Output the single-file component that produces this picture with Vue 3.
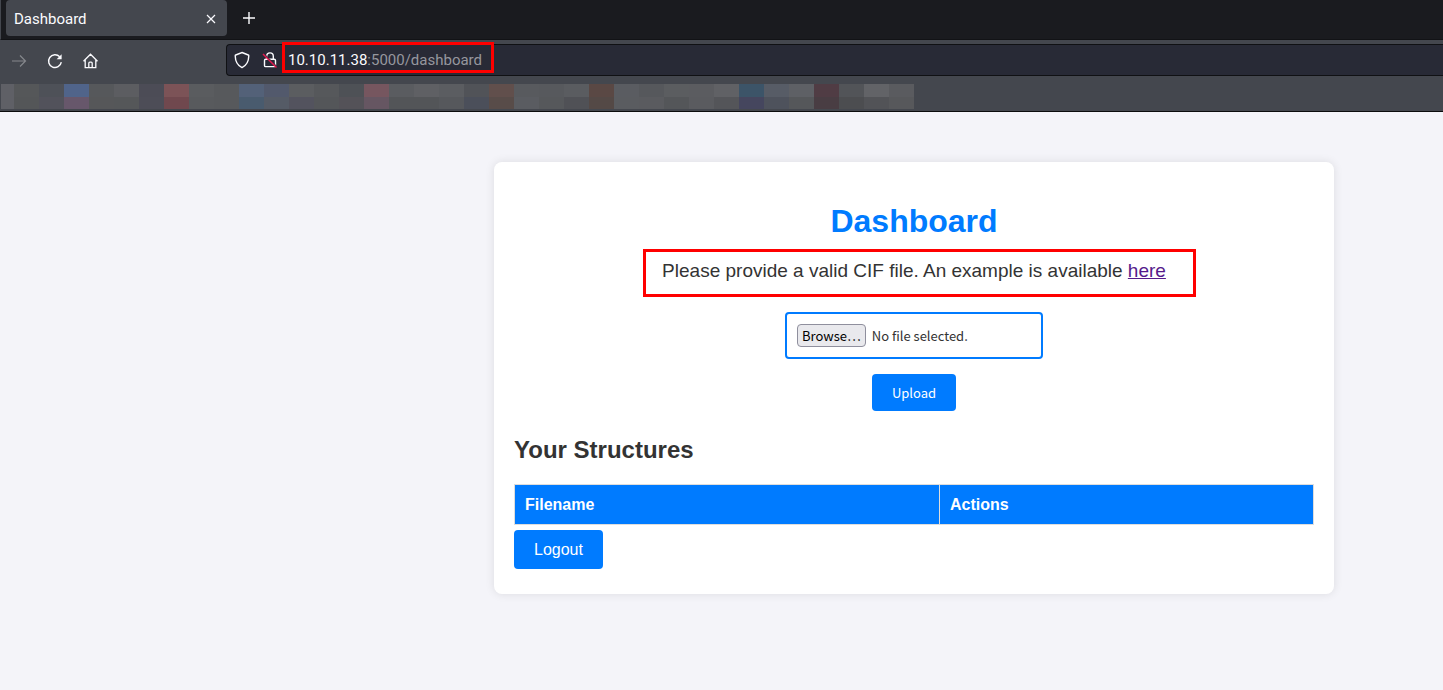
<script setup>
import { ref } from 'vue'

const address = { host: '10.10.11.38', rest: ':5000/dashboard' }
const fileLabel = ref('No file selected.')

function onFile(event) {
  const file = event.target.files[0]
  fileLabel.value = file ? file.name : 'No file selected.'
}

// Blurred bookmark blocks: [upper colour, lower colour]
const blocks = [
  ['#5f6066', '#5f6066'], ['#555759', '#545658'], ['#4e5158', '#52525b'], ['#50648a', '#67576b'],
  ['#56585b', '#565759'], ['#5c5d61', '#555759'], ['#4c4c56', '#4d4d57'], ['#7c5357', '#70484e'],
  ['#5a5c5f', '#585a5d'], ['#57595c', '#57595c'], ['#536178', '#495b6e'], ['#52596c', '#555b66'],
  ['#5b5d60', '#53535e'], ['#56585b', '#545659'], ['#4e5156', '#545258'], ['#76565f', '#665662'],
  ['#5a5c60', '#535558'], ['#5f6064', '#535558'], ['#5b5d61', '#56585c'], ['#515358', '#4b4f5a'],
  ['#614f4c', '#584c49'], ['#585a5e', '#5a5c61'], ['#57595d', '#56585b'], ['#5a5c60', '#505156'],
  ['#5a4844', '#544946'], ['#5a5c61', '#5a5c60'], ['#56585c', '#5a5b5f'], ['#5b5d60', '#545659'],
  ['#5b5c60', '#5a5b5f'], ['#606165', '#545559'], ['#3c5468', '#45465e'], ['#575c66', '#4e525c'],
  ['#5e6065', '#55575a'], ['#503c44', '#493d43'], ['#525458', '#4c4d50'], ['#626367', '#525357'],
  ['#5a5b5f', '#57585b']
]
</script>

<template>
  <div class="browser">
    <header class="chrome">
      <div class="tabs">
        <div class="tab">
          <span>Dashboard</span>
          <button class="icon-button" type="button" aria-label="Close tab">
            <svg width="10" height="10" viewBox="0 0 10 10"><path d="M1 1l8 8M9 1l-8 8" /></svg>
          </button>
        </div>
        <button class="icon-button new-tab" type="button" aria-label="New tab">
          <svg width="14" height="14" viewBox="0 0 14 14"><path d="M7 1v12M1 7h12" stroke-width="1.4" /></svg>
        </button>
      </div>

      <div class="toolbar">
        <nav class="nav">
          <button class="icon-button" type="button" aria-label="Forward" disabled>
            <svg width="16" height="16" viewBox="0 0 16 16"><path d="M1 8h14M9 2.500l5.500 5.500-5.500 5.500" /></svg>
          </button>
          <button class="icon-button" type="button" aria-label="Reload">
            <svg width="16" height="16" viewBox="0 0 16 16">
              <path d="M14.300 9.200A6.400 6.400 0 1 1 12.700 3.800" stroke-width="1.400" />
              <path class="solid" d="M14.600 1.200v5H9.600z" />
            </svg>
          </button>
          <button class="icon-button" type="button" aria-label="Home">
            <svg width="16" height="16" viewBox="0 0 16 16">
              <path d="M.5 8.200 7.500 1.200l7 7M2.200 7v7.600h10.600V7M5.800 14.500v-4.300q0-1 1-1h1.400q1 0 1 1v4.300" stroke-width="1.300" />
            </svg>
          </button>
        </nav>
        <div class="urlbar">
          <svg width="16" height="18" viewBox="0 0 16 18">
            <path d="M8 1.500 14.300 4q.5.200.5.800C14.700 10 12.500 14.500 8 16.600 3.500 14.500 1.300 10 1.200 4.800q0-.6.500-.8z" stroke-width="1.400" />
          </svg>
          <svg width="16" height="18" viewBox="0 0 16 18">
            <path d="M4.700 8V5.200a3.300 3.300 0 0 1 6.600 0V8M3.700 8.200h8.600q1.200 0 1.200 1.200v5q0 1.200-1.200 1.200H3.700q-1.200 0-1.200-1.200v-5q0-1.200 1.200-1.200z" stroke-width="1.400" />
            <path class="slash-gap" d="M2 3l13 13" />
            <path class="slash" d="M1 3l13.500 13.500" />
          </svg>
          <div class="address">
            <span class="host">{{ address.host }}</span><span>{{ address.rest }}</span>
          </div>
        </div>
      </div>

      <div class="bookmarks">
        <div v-for="(block, i) in blocks" :key="i" class="block">
          <i :style="{ background: block[0] }"></i>
          <i :style="{ background: block[1] }"></i>
        </div>
      </div>
    </header>

    <main class="page">
      <section class="card">
        <h1>Dashboard</h1>
        <p class="hint">Please provide a valid CIF file. An example is available <a href="#example">here</a></p>
        <form class="upload" @submit.prevent>
          <label class="picker">
            <input type="file" class="file" @change="onFile" />
            <span class="browse">Browse…</span>
            <span>{{ fileLabel }}</span>
          </label>
          <button class="action" type="submit">Upload</button>
        </form>
        <h2>Your Structures</h2>
        <table>
          <thead>
            <tr>
              <th class="filename" scope="col">Filename</th>
              <th scope="col">Actions</th>
            </tr>
          </thead>
        </table>
        <a class="action logout" href="#logout">Logout</a>
      </section>
    </main>
  </div>
</template>

<style>
body {
  background: #f4f4f9;
}
</style>

<style scoped>
.browser {
  overflow: hidden;
  color: #333;
  font-family: "Liberation Sans", Arial, sans-serif;
}

.browser * {
  box-sizing: border-box;
}

.chrome {
  background: #44474e;
  border-bottom: 1px solid #0c0c0d;
  color: #fbfbfe;
  font: 15px/20px Roboto, "Noto Sans", sans-serif;
}

svg {
  display: block;
  flex: none;
  fill: none;
  stroke: currentColor;
  stroke-width: 1.2;
}

.solid {
  fill: currentColor;
  stroke: none;
}

.icon-button {
  display: flex;
  padding: 0;
  border: 0;
  background: none;
  color: inherit;
}

.icon-button:disabled {
  color: #85878c;
}

.tabs {
  display: flex;
  align-items: center;
  height: 40px;
  padding: 0 0 3px 5px;
  background: #1a1b1f;
  border-left: 1px solid #44474e;
  border-bottom: 1px solid #121316;
}

.tab {
  display: flex;
  align-items: center;
  justify-content: space-between;
  width: 221px;
  height: 36px;
  padding: 1px 11px 0 8px;
  border-radius: 4px;
  background: #44474e;
}

.new-tab {
  margin-left: 15px;
}

.toolbar {
  display: flex;
  align-items: center;
  padding-top: 4px;
}

.nav {
  display: flex;
  gap: 20px;
  width: 226px;
  padding: 2px 0 0 11px;
}

.urlbar {
  display: flex;
  flex: 1;
  align-items: center;
  gap: 12px;
  height: 32px;
  padding-left: 7px;
  border: 1px solid #101114;
  border-right: 0;
  border-radius: 4px 0 0 4px;
  background: #282a36;
}

.address {
  position: relative;
  margin-left: -2px;
  color: #96979e;
}

.address::after {
  position: absolute;
  inset: -8px -12px -3px -6px;
  border: 3px solid #f00;
  content: "";
  pointer-events: none;
}

.host {
  color: #fbfbfe;
}

.slash-gap {
  stroke: #282a36;
}

.slash {
  stroke: #e2184f;
  stroke-width: 1.5;
}

.bookmarks {
  display: flex;
  padding: 8px 0 2px 1px;
}

.block {
  display: grid;
  grid-template-rows: 13px 12px;
  width: 25px;
}

.block:first-child {
  width: 13px;
}

.page {
  padding: 50px 109px 50px 0;
}

.card {
  max-width: 840px;
  margin-left: auto;
  padding: 41px 20px 25px;
  border-radius: 8px;
  background: #fff;
  box-shadow: 0 0 10px rgba(0, 0, 0, 0.1);
}

h1 {
  margin: 0;
  color: #007bff;
  font-size: 32px;
  line-height: 36px;
  text-align: center;
}

.hint {
  position: relative;
  width: fit-content;
  margin: 21px auto 30px;
  font-size: 19px;
  line-height: 22px;
}

.hint::after {
  position: absolute;
  inset: -11px -30px -15px -19px;
  border: 3px solid #f00;
  content: "";
  pointer-events: none;
}

.hint a {
  color: #551a8b;
}

.upload {
  display: flex;
  flex-direction: column;
  align-items: center;
  gap: 15px;
  font: 13px/17px "Noto Sans CJK SC", "Noto Sans", sans-serif;
}

.picker {
  position: relative;
  display: flex;
  align-items: center;
  gap: 6px;
  width: 258px;
  padding: 10px;
  border: 2px solid #007bff;
  border-radius: 4px;
}

.file {
  position: absolute;
  inset: 0;
  width: 100%;
  opacity: 0;
}

.browse {
  padding: 2px 4px;
  border: 1px solid #8f8f9d;
  border-radius: 4px;
  background: #e9e9ed;
  color: #000;
}

.action {
  padding: 10px 20px;
  border: 0;
  border-radius: 4px;
  background: #007bff;
  color: #fff;
  font: inherit;
  text-decoration: none;
}

h2 {
  margin: 25px 0 20px;
  font-size: 24px;
  line-height: 28px;
}

table {
  width: 100%;
  border-collapse: collapse;
}

th {
  padding: 10px;
  border: 1px solid #ddd;
  background: #007bff;
  color: #fff;
  font-size: 16px;
  line-height: 19px;
  text-align: left;
}

.filename {
  width: 425px;
}

.logout {
  display: block;
  width: fit-content;
  margin-top: 5px;
  font-size: 16px;
  line-height: 19px;
}
</style>
